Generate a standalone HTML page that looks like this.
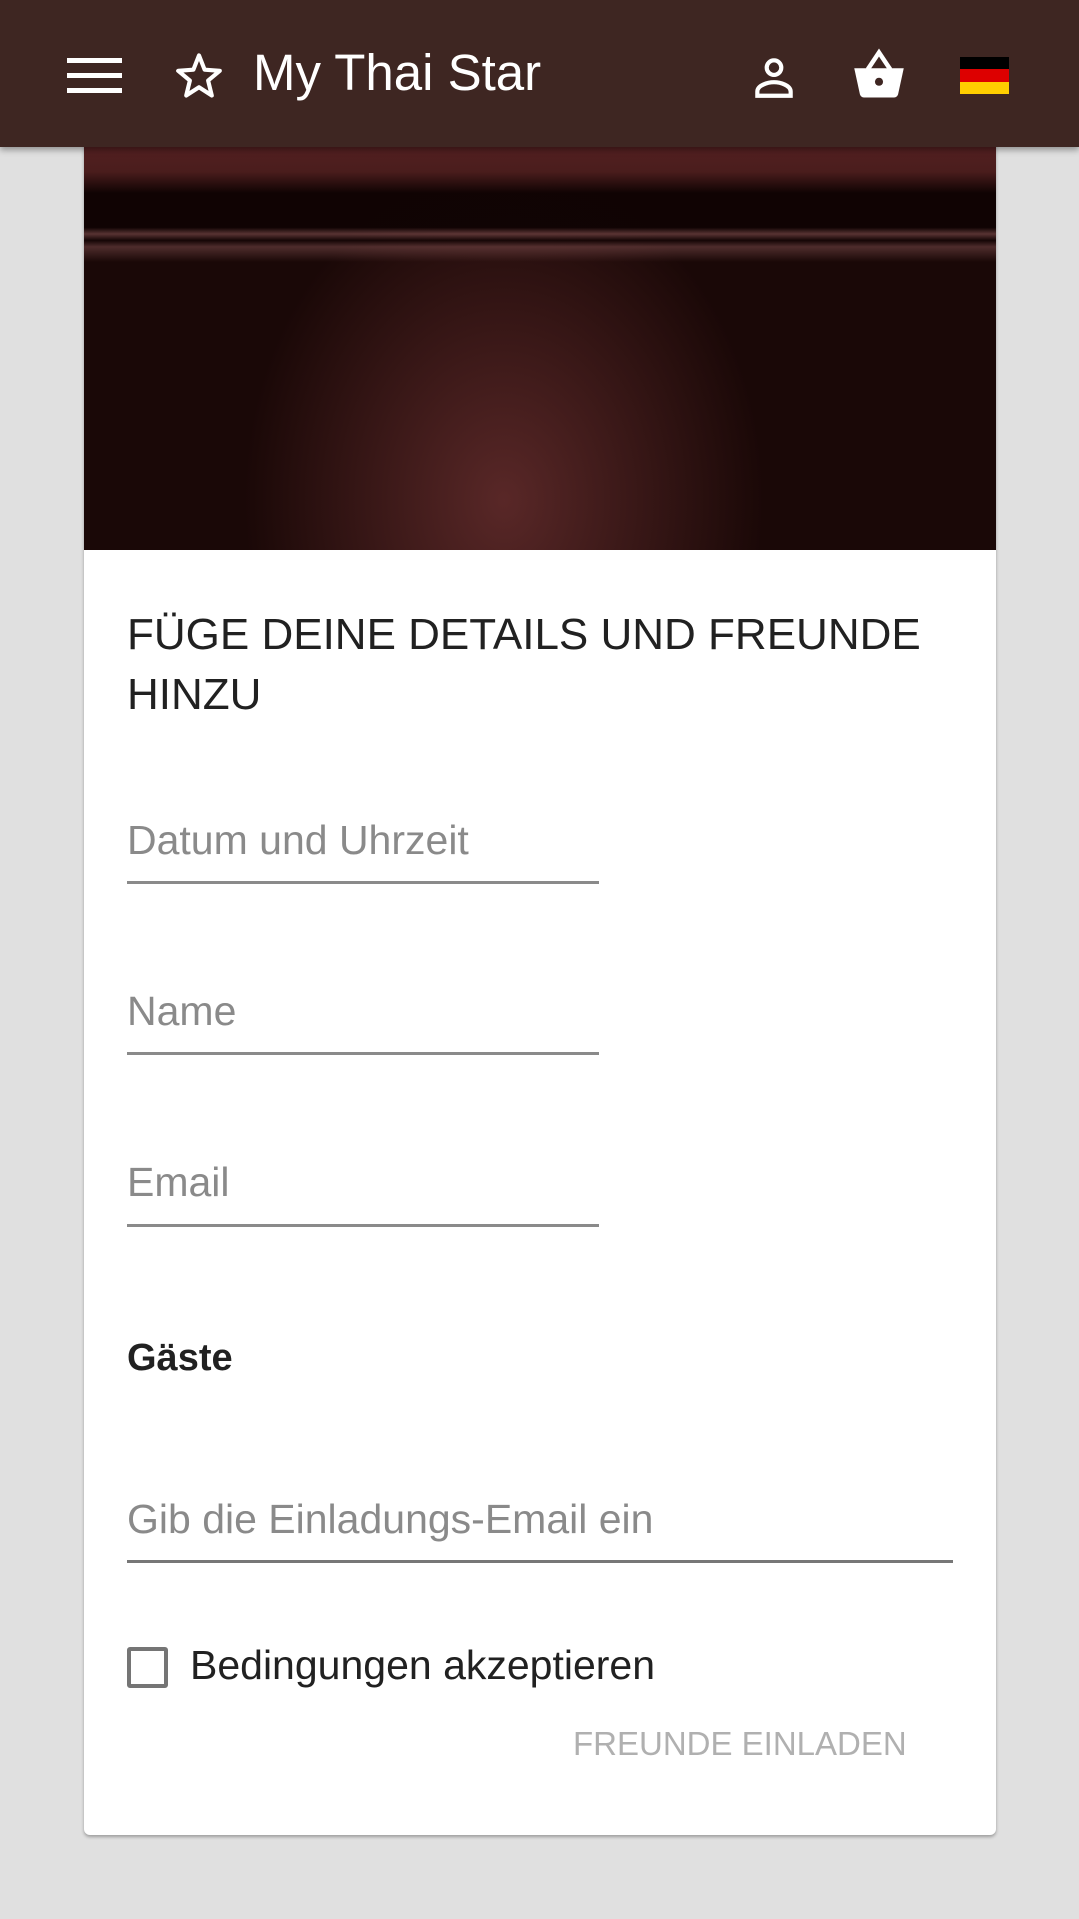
<!DOCTYPE html>
<html><head><meta charset="utf-8"><style>
*{margin:0;padding:0;box-sizing:border-box}
body{width:1079px;height:1919px;background:#e0e0e0;font-family:"Liberation Sans",Roboto,sans-serif;position:relative;overflow:hidden}
.hdr{position:absolute;left:0;top:0;width:1079px;height:147px;background:#3e2622;box-shadow:0 3px 6px rgba(0,0,0,.35);z-index:2}
.card{position:absolute;left:84px;top:120px;width:912px;height:1715px;background:#fff;border-radius:0 0 6px 6px;box-shadow:0 2px 3px rgba(0,0,0,.3);overflow:hidden}
.img{position:absolute;left:0;top:0;width:912px;height:430px;background:
linear-gradient(180deg,rgba(120,45,50,.7) 0,rgba(100,40,40,.65) 12%,rgba(15,3,3,.95) 17%,rgba(15,3,3,.95) 25%,rgba(130,80,80,.6) 26.5%,rgba(20,5,5,.9) 28%,rgba(130,80,80,.5) 29.5%,rgba(0,0,0,0) 33%),
radial-gradient(ellipse 260px 330px at 420px 380px,rgba(110,50,50,.75),rgba(0,0,0,0)),
#1a0807}
.t{position:absolute;color:#212121}
.ph{position:absolute;left:43px;color:#8a8a8a;font-size:41px}
.ln{position:absolute;left:43px;height:3px;background:#8a8a8a}
</style></head><body>
<div class="hdr">
<svg style="position:absolute;left:67px;top:56px" width="56" height="40"><rect x="0" y="2" width="55" height="5" fill="#fff"/><rect x="0" y="17" width="55" height="5" fill="#fff"/><rect x="0" y="32" width="55" height="5" fill="#fff"/></svg>
<svg style="position:absolute;left:172px;top:50px" width="54" height="52" viewBox="0 0 24 24"><path d="M12 2.5l2.6 6.6 7 .5-5.4 4.5 1.7 6.9L12 17.2 6.1 21l1.7-6.9L2.4 9.6l7-.5z" fill="none" stroke="#fff" stroke-width="1.9" stroke-linejoin="round"/></svg>
<div style="position:absolute;left:253px;top:43px;color:#fff;font-size:51px">My Thai Star</div>
<svg style="position:absolute;left:748px;top:52px" width="52" height="50" viewBox="0 0 24 24"><circle cx="12" cy="7.5" r="3.5" fill="none" stroke="#fff" stroke-width="2"/><path d="M4 21v-2c0-3 5-4.5 8-4.5s8 1.5 8 4.5v2z" fill="none" stroke="#fff" stroke-width="2"/></svg>
<svg style="position:absolute;left:848px;top:48px" width="62" height="54" viewBox="0 0 24 24"><path d="M1 9h22l-2.5 11.5c-.2.8-.9 1.5-1.8 1.5H5.3c-.9 0-1.6-.7-1.8-1.5z" fill="#fff"/><path d="M7 9.5L12 2l5 7.5" fill="none" stroke="#fff" stroke-width="2"/><circle cx="12" cy="15" r="1.8" fill="#3e2622"/></svg>
<div style="position:absolute;left:960px;top:57px;width:49px;height:37px">
<div style="height:12.3px;background:#000"></div><div style="height:12.3px;background:#dd0000"></div><div style="height:12.4px;background:#ffce00"></div></div>
</div>
<div class="card">
<div class="img"></div>
<div class="t" style="left:43px;top:485px;font-size:44px;line-height:60px;width:850px">FÜGE DEINE DETAILS UND FREUNDE HINZU</div>
<div class="ph" style="top:697px">Datum und Uhrzeit</div><div class="ln" style="top:761px;width:472px"></div>
<div class="ph" style="top:868px">Name</div><div class="ln" style="top:932px;width:472px"></div>
<div class="ph" style="top:1039px">Email</div><div class="ln" style="top:1104px;width:472px"></div>
<div class="t" style="left:43px;top:1217px;font-size:38px;font-weight:bold">Gäste</div>
<div class="ph" style="top:1376px">Gib die Einladungs-Email ein</div><div class="ln" style="top:1440px;width:826px;background:#777"></div>
<div style="position:absolute;left:43px;top:1527px;width:41px;height:41px;border:4px solid #757575;border-radius:3px"></div>
<div class="t" style="left:106px;top:1522px;font-size:41px">Bedingungen akzeptieren</div>
<div style="position:absolute;left:489px;top:1605px;font-size:33px;color:#b0b0b0">FREUNDE EINLADEN</div>
</div>
</body></html>
